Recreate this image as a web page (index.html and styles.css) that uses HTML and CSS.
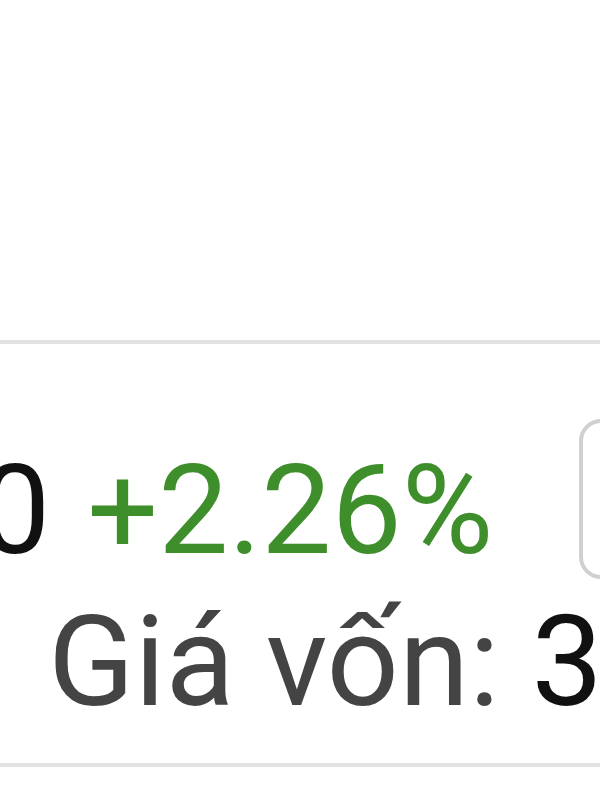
FILE: index.html
```html
<!DOCTYPE html>
<html lang="vi">
<head>
<meta charset="utf-8">
<link rel="stylesheet" href="styles.css">
</head>
<body>
<div class="screen">
  <div class="top-area"></div>
  <div class="divider"></div>
  <div class="quote">
    <div class="quote-row">
      <span class="price">24.550</span>
      <span class="change">+2.26%</span>
      <div class="action-box"></div>
    </div>
    <div class="cost-row">
      <span class="cost-label">Giá vốn:</span>
      <span class="cost-value">30.000</span>
    </div>
  </div>
  <div class="divider"></div>
  <div class="bottom-area"></div>
</div>
</body>
</html>
```
FILE: styles.css
```css
html, body {
  margin: 0;
  padding: 0;
  background: #ffffff;
  font-family: Roboto, "Liberation Sans", sans-serif;
}
.screen {
  width: 600px;
  height: 800px;
  overflow: hidden;
  display: flex;
  flex-direction: column;
}
.top-area {
  height: 340px;
  flex: none;
}
.divider {
  height: 4px;
  background: #e2e2e2;
  flex: none;
}
.quote {
  height: 419px;
  flex: none;
  display: flex;
  flex-direction: column;
}
.quote-row {
  display: flex;
  align-items: center;
  white-space: nowrap;
  margin-top: 74px;
  margin-left: -334px;
  height: 162px;
}
.price {
  font-size: 125px;
  color: #111111;
  line-height: 1;
  padding-top: 22px;
}
.change {
  font-size: 125px;
  color: #3e8e2b;
  line-height: 1;
  margin-left: 37px;
  padding-top: 22px;
}
.action-box {
  flex: none;
  width: 200px;
  height: 160px;
  margin-left: 86px;
  border: 4px solid #d0d0d0;
  border-radius: 22px;
  box-sizing: border-box;
}
.cost-row {
  white-space: nowrap;
  margin-left: 48px;
  margin-top: 18px;
  font-size: 127px;
  line-height: 1;
}
.cost-label {
  color: #444444;
}
.cost-value {
  color: #111111;
}
.bottom-area {
  flex: 1;
}
```
